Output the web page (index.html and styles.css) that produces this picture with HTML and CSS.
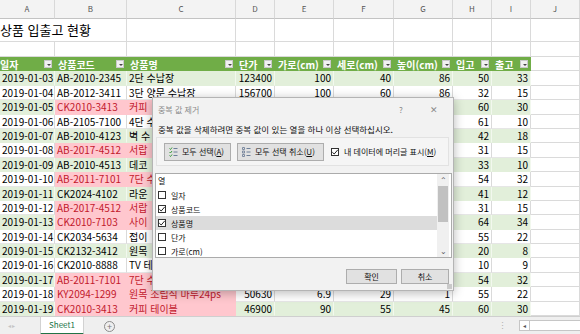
FILE: index.html
```html
<!DOCTYPE html>
<html lang="ko">

<head>
    <meta charset="UTF-8" />
    <title>상품 입출고 현황</title>
    <link rel="stylesheet" href="styles.css">
</head>

<body>
    <div class="app">
        <div class="sheet">
            <div class="row colhead">
                <div>A</div><div>B</div><div>C</div><div>D</div><div>E</div>
                <div>F</div><div>G</div><div>H</div><div>I</div><div>J</div>
            </div>
            <div class="row title-row">
                <div class="title">상품 입출고 현황</div>
                <div></div><div></div><div></div><div></div><div></div><div></div><div></div><div></div>
            </div>
            <div class="row blank-row">
                <div></div><div></div><div></div><div></div><div></div><div></div><div></div><div></div><div></div><div></div>
            </div>
            <div class="row thead">
                <div class="th first">일자<span class="dd"></span></div>
                <div class="th">상품코드<span class="dd"></span></div>
                <div class="th">상품명<span class="dd"></span></div>
                <div class="th">단가<span class="dd"></span></div>
                <div class="th">가로(cm)<span class="dd"></span></div>
                <div class="th">세로(cm)<span class="dd"></span></div>
                <div class="th">높이(cm)<span class="dd"></span></div>
                <div class="th">입고<span class="dd"></span></div>
                <div class="th">출고<span class="dd"></span></div>
                <div class="out"></div>
            </div>
            <div id="rows"></div>
        </div>

        <div class="tabbar">
            <div class="tabnav">◂ ▸</div>
            <div class="tab">Sheet1</div>
            <div class="addsheet">+</div>
            <div class="spacer"></div>
            <div class="dots">⋮</div>
            <div class="hscroll"><span class="harrow">◂</span></div>
        </div>

        <div class="dialog">
            <div class="dlg-title">
                <span class="dlg-name">중복 값 제거</span>
                <span class="dlg-help">?</span>
                <span class="dlg-close">✕</span>
            </div>
            <div class="dlg-msg">중복 값을 삭제하려면 중복 값이 있는 열을 하나 이상 선택하십시오.</div>
            <div class="dlg-tools">
                <button class="btn btn-all">
                    <svg width="9" height="10" viewBox="0 0 9 10">
                        <path d="M0.5 1.5 L1.5 2.5 L3 0.5 M0.5 5 L1.5 6 L3 4 M0.5 8.5 L1.5 9.5 L3 7.5" stroke="#3a9a3a" fill="none" stroke-width="1"/>
                        <path d="M4.5 1.5 H8.5 M4.5 5 H8.5 M4.5 8.5 H8.5" stroke="#6d7f99" stroke-width="1"/>
                    </svg>
                    <span>모두 선택(<u>A</u>)</span>
                </button>
                <button class="btn btn-none">
                    <svg width="9" height="10" viewBox="0 0 9 10">
                        <path d="M0.5 0.5 H2.5 V2.5 H0.5 Z M0.5 4 H2.5 V6 H0.5 Z M0.5 7.5 H2.5 V9.5 H0.5 Z" stroke="#7c8aa0" fill="none" stroke-width="1"/>
                        <path d="M4.5 1.5 H8.5 M4.5 5 H8.5 M4.5 8.5 H8.5" stroke="#6d7f99" stroke-width="1"/>
                    </svg>
                    <span>모두 선택 취소(<u>U</u>)</span>
                </button>
                <label class="hdr-check">
                    <span class="cb checked"><svg viewBox="0 0 8 8"><path d="M1.3 4.2 L3.2 6 L6.8 1.8" stroke="#222" fill="none" stroke-width="1"/></svg></span>
                    <span>내 데이터에 머리글 표시(<u>M</u>)</span>
                </label>
            </div>
            <div class="listbox">
                <div class="list">
                    <div class="list-head">열</div>
                    <div class="item"><span class="cb"></span>일자</div>
                    <div class="item"><span class="cb checked"><svg viewBox="0 0 8 8"><path d="M1.3 4.2 L3.2 6 L6.8 1.8" stroke="#222" fill="none" stroke-width="1"/></svg></span>상품코드</div>
                    <div class="item selected"><span class="cb checked"><svg viewBox="0 0 8 8"><path d="M1.3 4.2 L3.2 6 L6.8 1.8" stroke="#222" fill="none" stroke-width="1"/></svg></span>상품명</div>
                    <div class="item"><span class="cb"></span>단가</div>
                    <div class="item"><span class="cb"></span>가로(cm)</div>
                </div>
                <div class="vscroll">
                    <span class="varrow">⌃</span>
                    <span class="thumb"></span>
                    <span class="varrow down">⌄</span>
                </div>
            </div>
            <div class="dlg-footer">
                <button class="btn btn-ok">확인</button>
                <button class="btn btn-cancel">취소</button>
            </div>
            <div class="grip"></div>
        </div>
    </div>

    <script>
        // 마지막 값 1 = 중복 표시(빨강) 셀, 대화상자에 가려진 값은 비워 둠
        const data = [
            ["2019-01-03", "AB-2010-2345", "2단 수납장", "123400", "100", "40", "86", "50", "33", 0],
            ["2019-01-04", "AB-2012-3411", "3단 양문 수납장", "156700", "100", "60", "86", "32", "15", 0],
            ["2019-01-05", "CK2010-3413", "커피", "", "", "", "", "60", "30", 1],
            ["2019-01-06", "AB-2105-7100", "4단 수", "", "", "", "", "61", "10", 0],
            ["2019-01-07", "AB-2010-4123", "벽 수", "", "", "", "", "42", "18", 0],
            ["2019-01-08", "AB-2017-4512", "서랍", "", "", "", "", "31", "15", 1],
            ["2019-01-09", "AB-2010-4513", "데코", "", "", "", "", "33", "10", 0],
            ["2019-01-10", "AB-2011-7101", "7단 수", "", "", "", "", "54", "32", 1],
            ["2019-01-11", "CK2024-4102", "라운", "", "", "", "", "41", "12", 0],
            ["2019-01-12", "AB-2017-4512", "서랍", "", "", "", "", "31", "15", 1],
            ["2019-01-13", "CK2010-7103", "사이", "", "", "", "", "64", "34", 1],
            ["2019-01-14", "CK2034-5634", "접이", "", "", "", "", "55", "22", 0],
            ["2019-01-15", "CK2132-3412", "원목", "", "", "", "", "20", "8", 0],
            ["2019-01-16", "CK2010-8888", "TV 테", "", "", "", "", "10", "9", 0],
            ["2019-01-17", "AB-2011-7101", "7단 수", "", "", "", "", "54", "32", 1],
            ["2019-01-18", "KY2094-1299", "원목 조립식 마루24ps", "50630", "6.9", "29", "1", "55", "22", 1],
            ["2019-01-19", "CK2010-3413", "커피 테이블", "46900", "90", "55", "45", "60", "30", 1]
        ];

        const rows = document.getElementById("rows");
        data.forEach((d, i) => {
            const row = document.createElement("div");
            row.className = "row trow" + (i % 2 === 0 ? " band" : "");
            let html = "";
            for (let c = 0; c < 9; c++) {
                let cls = "td";
                if (c !== 1 && c !== 2) cls += " num";
                if (d[9] && (c === 1 || c === 2)) cls += " dup";
                html += '<div class="' + cls + '">' + d[c] + '</div>';
            }
            html += '<div class="out"></div>';
            row.innerHTML = html;
            rows.appendChild(row);
        });
    </script>
</body>

</html>
```

FILE: styles.css
```css
body {
    margin: 0;
    font-family: "Noto Sans CJK KR", "Noto Sans", sans-serif;
    overflow: hidden;
}

.app {
    position: relative;
    width: 580px;
    height: 334px;
    overflow: hidden;
    background: #fff;
    display: flex;
    flex-direction: column;
}

/* SHEET GRID */
.row {
    display: grid;
    grid-template-columns: 55px 72px 109px 39px 59px 60px 59px 39px 39px 49px;
}

.row > div {
    box-sizing: border-box;
    border-right: 1px solid #dadada;
    border-bottom: 1px solid #dadada;
    white-space: nowrap;
    overflow: hidden;
    color: #000;
}

.colhead {
    height: 19px;
    background: #f3f3f3;
}

.colhead > div {
    font-size: 8px;
    color: #555;
    text-align: center;
    line-height: 18px;
    border-right-color: #d8d8d8;
    border-bottom-color: #c3c3c3;
}

.title-row {
    height: 23px;
}

.title-row .title {
    grid-column: span 2;
    font-size: 13px;
    line-height: 22px;
}

.blank-row {
    height: 15px;
}

/* TABLE */
.thead {
    height: 14.4px;
}

.th {
    background: #70ad47;
    color: #fff !important;
    font-size: 10px;
    font-weight: bold;
    display: flex;
    align-items: center;
    justify-content: space-between;
    padding: 0 2px 0 3px;
    border-right-color: #70ad47 !important;
    border-bottom: none !important;
}

.th.first {
    padding-left: 0;
}

.dd {
    flex: 0 0 auto;
    position: relative;
    width: 8px;
    height: 8px;
    background: #f1f1f1;
    border: 1px solid #c9c9c9;
    box-sizing: border-box;
}

.dd::after {
    content: "";
    position: absolute;
    left: 1.5px;
    top: 2.5px;
    border-left: 2.5px solid transparent;
    border-right: 2.5px solid transparent;
    border-top: 2.5px solid #444;
}

.trow {
    height: 14.4px;
}

.td {
    font-size: 10px;
    line-height: 13.5px;
    padding: 0 2px;
    border-bottom-color: #e6e6e6 !important;
}

.band .td {
    background: #e2efda;
    border-right-color: #f2f8ee;
    border-bottom-color: #e2efda !important;
}

.td.num {
    text-align: right;
}

.td.dup {
    background: #ffc7ce !important;
    color: #c2192c;
    border-right-color: #ffc7ce;
    border-bottom-color: #ffc7ce !important;
}

/* SHEET TABS */
.tabbar {
    flex: 1;
    display: flex;
    align-items: stretch;
    background: #efefef;
    border-top: 1px solid #cfcfcf;
}

.tabnav {
    width: 40px;
    font-size: 6px;
    color: #c4c4c4;
    line-height: 17px;
    padding-left: 8px;
    box-sizing: border-box;
}

.tab {
    width: 44px;
    background: #fff;
    color: #217346;
    font-size: 8px;
    text-align: center;
    line-height: 15px;
    border-bottom: 2px solid #217346;
    border-left: 1px solid #d2d2d2;
    border-right: 1px solid #d2d2d2;
    box-sizing: border-box;
}

.addsheet {
    width: 9px;
    height: 9px;
    margin: 4px 0 0 20px;
    border: 1px solid #8c8c8c;
    border-radius: 50%;
    font-size: 9px;
    line-height: 9px;
    text-align: center;
    color: #777;
}

.spacer {
    flex: 1;
}

.dots {
    color: #b0b0b0;
    font-size: 9px;
    line-height: 17px;
    margin-right: 12px;
}

.hscroll {
    width: 61px;
    margin: 3px 0 4px;
    background: #fff;
    border: 1px solid #c6c6c6;
    border-right: none;
    box-sizing: border-box;
    display: flex;
}

.harrow {
    width: 9px;
    border-right: 1px solid #c6c6c6;
    font-size: 6px;
    line-height: 9px;
    text-align: center;
    color: #555;
}

/* DIALOG */
.dialog {
    position: absolute;
    left: 152px;
    top: 97px;
    width: 302px;
    height: 194px;
    box-sizing: border-box;
    background: #f2f2f2;
    border: 1px solid #b4b4b4;
    box-shadow: 0 2px 10px rgba(0, 0, 0, 0.28);
    padding: 0 1px;
    font-size: 8px;
    color: #111;
}

.dlg-title {
    height: 23px;
    display: flex;
    align-items: center;
    padding-left: 4px;
    color: #8a8a8a;
}

.dlg-name {
    flex: 1;
}

.dlg-help {
    width: 10px;
    margin-right: 21px;
    font-size: 8px;
}

.dlg-close {
    width: 10px;
    margin-right: 12px;
    font-size: 9px;
}

.dlg-msg {
    height: 14px;
    line-height: 14px;
    margin-top: 1px;
    padding-left: 4px;
    font-size: 8.5px;
}

.dlg-tools {
    height: 29px;
    margin: 1px 3px 0 2px;
    box-sizing: border-box;
    border: 1px solid #e2e2e2;
    background: #f5f5f5;
    display: flex;
    align-items: center;
    padding-left: 7px;
}

.btn {
    font-family: inherit;
    font-size: 8px;
    color: #111;
    background: #e1e1e1;
    border: 1px solid #adadad;
    padding: 0;
    margin: 0;
    box-sizing: border-box;
}

.btn u {
    text-decoration: underline;
}

.btn-all,
.btn-none {
    height: 18px;
    display: flex;
    align-items: center;
    gap: 4px;
    padding-left: 4px;
}

.btn-all {
    width: 67px;
    margin-right: 6px;
}

.btn-none {
    width: 87px;
    margin-right: 7px;
}

.hdr-check {
    display: flex;
    align-items: center;
    gap: 5px;
}

.cb {
    width: 8px;
    height: 8px;
    box-sizing: border-box;
    border: 1px solid #333;
    background: #fff;
    display: inline-flex;
    flex: 0 0 auto;
}

.cb svg {
    width: 8px;
    height: 8px;
    margin: -1px;
}

.listbox {
    height: 85px;
    margin-top: 7px;
    margin-left: 1px;
    box-sizing: border-box;
    border: 1px solid #ababab;
    background: #fff;
    display: flex;
}

.list {
    flex: 1;
}

.list-head {
    height: 14px;
    line-height: 14px;
    padding-left: 2px;
}

.item {
    height: 14px;
    display: flex;
    align-items: center;
    gap: 5px;
    padding-left: 2px;
}

.item.selected {
    background: #dcdcdc;
}

.vscroll {
    width: 12px;
    margin-right: 2px;
    background: #f0f0f0;
    display: flex;
    flex-direction: column;
    align-items: center;
}

.varrow {
    height: 12px;
    font-size: 8px;
    line-height: 12px;
    color: #606060;
}

.thumb {
    width: 10px;
    height: 36px;
    background: #c1c1c1;
}

.varrow.down {
    margin-top: auto;
}

.dlg-footer {
    margin-top: 11px;
    display: flex;
    justify-content: flex-end;
    gap: 4px;
    padding-right: 3px;
}

.btn-ok,
.btn-cancel {
    height: 15px;
    line-height: 13px;
}

.btn-ok {
    width: 51px;
}

.btn-cancel {
    width: 48px;
}

.grip {
    position: absolute;
    right: 1px;
    bottom: 1px;
    width: 5px;
    height: 5px;
    background-image: radial-gradient(#9a9a9a 0.6px, transparent 0.8px);
    background-size: 2px 2px;
}
```
